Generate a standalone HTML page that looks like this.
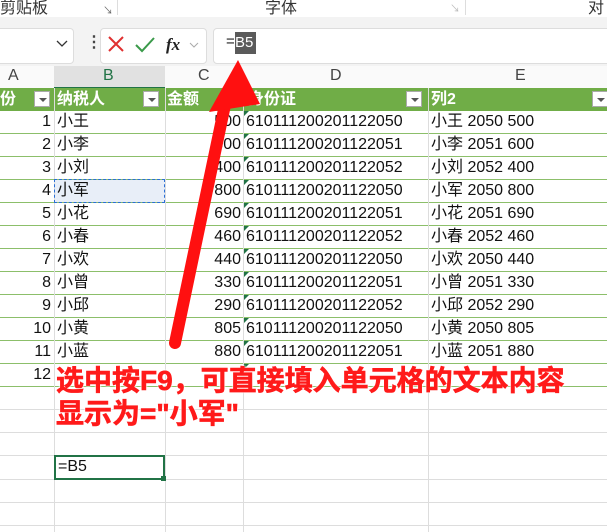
<!DOCTYPE html><html><head><meta charset="utf-8"><style>
body{margin:0;width:607px;height:532px;overflow:hidden;background:#fff;font-family:"Liberation Sans","Noto Sans CJK SC",sans-serif;position:relative}
.a{position:absolute}
.t{font-size:16px;color:#111;white-space:nowrap;line-height:22px;height:22px}
.hd{position:absolute;top:88px;height:23px;background:#70ad47;color:#fff;font-size:16px;line-height:23px;font-weight:bold}
.dd{position:absolute;top:91px;width:16px;height:16px;background:#fff;border:1px solid #aaa;box-sizing:border-box}
.dd:after{content:"";position:absolute;left:4px;top:6px;border:4px solid transparent;border-top:4px solid #555}
</style></head><body>
<div class="a" style="left:0;top:0;width:607px;height:17px;background:#fff;box-shadow:0 2px 3px #ccc;overflow:hidden">
<span class="a" style="left:0;top:-6px;font-size:16px;color:#333">剪贴板</span>
<span class="a" style="left:103px;top:2px;font-size:10px;color:#666">↘</span>
<span class="a" style="left:117px;top:0;width:1px;height:15px;background:#ddd"></span>
<span class="a" style="left:265px;top:-6px;font-size:16px;color:#333">字体</span>
<span class="a" style="left:450px;top:0;font-size:10px;color:#bbb">↘</span>
<span class="a" style="left:465px;top:0;width:1px;height:15px;background:#ddd"></span>
<span class="a" style="left:588px;top:-6px;font-size:16px;color:#333">对齐</span>
</div>
<div class="a" style="left:0;top:17px;width:607px;height:49px;background:#f3f3f3"></div>
<div class="a" style="left:-5px;top:28px;width:79px;height:36px;border:1px solid #ddd;border-radius:4px;background:#fff;box-sizing:border-box"></div>
<svg class="a" style="left:56px;top:40px" width="12" height="8"><path d="M1 1L6 6L11 1" stroke="#333" stroke-width="1.3" fill="none"/></svg>
<span class="a" style="left:86px;top:32px;font-size:16px;font-weight:bold;color:#444">⋮</span>
<div class="a" style="left:100px;top:28px;width:107px;height:36px;border:1px solid #ddd;border-radius:4px;background:#fff;box-sizing:border-box"></div>
<svg class="a" style="left:106px;top:34px" width="100" height="22"><path d="M3 3L17 17M17 3L3 17" stroke="#e03030" stroke-width="2"/><path d="M30 11L36 17L48 4" stroke="#3a9a4a" stroke-width="2" fill="none"/><text x="60" y="16" font-family="Liberation Serif" font-style="italic" font-weight="bold" font-size="17" fill="#222">fx</text><path d="M84 9L88 13L92 9" stroke="#aaa" fill="none"/></svg>
<div class="a" style="left:213px;top:28px;width:400px;height:36px;border:1px solid #ddd;border-radius:4px;background:#fff;box-sizing:border-box"></div>
<span class="a" style="left:226px;top:33px;font-size:15px;color:#222">=</span>
<span class="a" style="left:235px;top:32px;width:21px;height:22px;background:#5a5a5a;color:#fff;font-size:15px;line-height:22px">B5</span>
<div class="a" style="left:0;top:66px;width:607px;height:22px;background:#fafafa;border-bottom:1px solid #ddd"></div>
<div class="a" style="left:54px;top:66px;width:111px;height:21px;background:#e1e1e1;border-bottom:2px solid #217346"></div>
<span class="a" style="left:8px;top:67px;font-size:16px;color:#444">A</span>
<span class="a" style="left:103px;top:67px;font-size:16px;color:#217346">B</span>
<span class="a" style="left:198px;top:67px;font-size:16px;color:#444">C</span>
<span class="a" style="left:330px;top:67px;font-size:16px;color:#444">D</span>
<span class="a" style="left:515px;top:67px;font-size:16px;color:#444">E</span>
<div class="hd" style="left:0;width:607px"></div>
<span class="hd" style="left:0">份</span><span class="dd" style="left:34px"></span>
<span class="hd" style="left:57px">纳税人</span><span class="dd" style="left:143px"></span>
<span class="hd" style="left:167px">金额</span>
<span class="hd" style="left:248px">身份证</span><div class="dd" style="left:406px"></div>
<span class="hd" style="left:431px">列2</span><span class="dd" style="left:592px"></span>
<div class="a" style="left:54px;top:179px;width:111px;height:24px;background:#e8eef8"></div>
<div id="g"></div>
<script>
var n=["小王","小李","小刘","小军","小花","小春","小欢","小曾","小邱","小黄","小蓝",""],m=[500,600,400,800,690,460,440,330,290,805,880,""],h="";
for(var i=0;i<12;i++){var y=111+23*i,id=["2050","2051","2052"][i%3];
h+='<div class="a" style="left:0;top:'+(y+22)+'px;width:607px;height:1px;background:#8cbf6a"></div>';
h+='<span class="a t" style="right:556px;top:'+y+'px">'+(i+1)+'</span>';
if(i<11){h+='<span class="a t" style="left:57px;top:'+y+'px">'+n[i]+'</span><span class="a t" style="right:366px;top:'+y+'px">'+m[i]+'</span><span class="a t" style="left:246px;top:'+y+'px">61011120020112'+id+'</span><span class="a t" style="left:431px;top:'+y+'px">'+n[i]+' '+id+' '+m[i]+'</span>';}
h+='<div class="a" style="left:243px;top:'+y+'px;border-top:6px solid #217346;border-right:6px solid transparent"></div>';}
for(var j=0;j<6;j++){h+='<div class="a" style="left:0;top:'+(409+23*j+(j>2?1:0))+'px;width:607px;height:1px;background:#ddd"></div>';}
[54,165,243,428].forEach(function(x){h+='<div class="a" style="left:'+x+'px;top:88px;width:1px;height:444px;background:#ddd"></div>'});
document.getElementById("g").outerHTML=h;
</script>
<div class="a" style="left:54px;top:179px;width:111px;height:24px;border:1px dashed #2b6fd6;box-sizing:border-box"></div>
<div class="a" style="left:54px;top:455px;width:111px;height:25px;border:2px solid #217346;box-sizing:border-box"></div>
<div class="a" style="left:161px;top:476px;width:5px;height:5px;background:#217346"></div>
<span class="a t" style="left:58px;top:456px">=B5</span>
<svg class="a" style="left:0;top:0" width="607" height="532"><path d="M175 343L226 100" stroke="#ff1010" stroke-width="12" stroke-linecap="round"/><path d="M238 60L209 112L260 104Z" fill="#ff1010"/></svg>
<div class="a" style="left:56px;top:364px;font-size:28px;font-weight:bold;color:#ff1a1a;line-height:33px;-webkit-text-stroke:0.6px #ff1a1a;text-shadow:0 0 2px #fff,0 0 2px #fff,0 0 2px #fff;white-space:nowrap">选中按F9，可直接填入单元格的文本内容<br>显示为="小军"</div>
</body></html>
